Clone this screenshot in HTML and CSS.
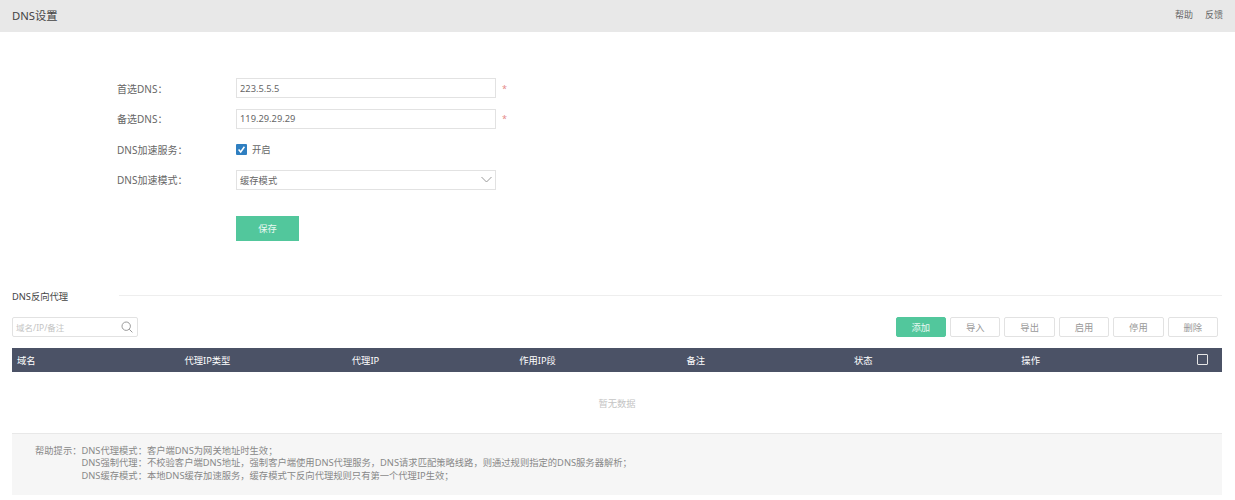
FILE: index.html
```html
<!DOCTYPE html>
<html>
<head>
  <title>DNS设置</title>
  <meta charset="UTF-8">
  <link rel="stylesheet" href="styles.css">
</head>
<body>
  <div class="top-bar">
    <span class="page-title">DNS设置</span>
    <div class="top-links">
      <a>帮助</a>
      <a>反馈</a>
    </div>
  </div>

  <!-- DNS settings form -->
  <div class="form">
    <div class="form-row">
      <label>首选DNS：</label>
      <input type="text" class="text-input" value="223.5.5.5">
      <span class="required">*</span>
    </div>
    <div class="form-row">
      <label>备选DNS：</label>
      <input type="text" class="text-input" value="119.29.29.29">
      <span class="required">*</span>
    </div>
    <div class="form-row">
      <label>DNS加速服务：</label>
      <span class="check-box">
        <svg width="11" height="11" viewBox="0 0 11 11"><path d="M2.6 5.6 L4.7 8 L8.4 2.8" fill="none" stroke="#fff" stroke-width="1.5"/></svg>
      </span>
      <span class="check-label">开启</span>
    </div>
    <div class="form-row">
      <label>DNS加速模式：</label>
      <div class="select-box">
        <span>缓存模式</span>
        <svg width="11" height="7" viewBox="0 0 11 7"><path d="M0.5 1 L5.5 6 L10.5 1" fill="none" stroke="#999" stroke-width="1"/></svg>
      </div>
    </div>
    <button class="save-btn">保存</button>
  </div>

  <!-- Reverse proxy section -->
  <div class="section">
    <div class="section-title">
      <span>DNS反向代理</span>
      <div class="section-line"></div>
    </div>

    <div class="toolbar">
      <div class="search-box">
        <span>域名/IP/备注</span>
        <svg width="12" height="12" viewBox="0 0 12 12"><circle cx="5.2" cy="5.2" r="4.2" fill="none" stroke="#999" stroke-width="1"/><path d="M8.2 8.2 L11.4 11.4" stroke="#999" stroke-width="1"/></svg>
      </div>
      <div class="actions">
        <button class="btn btn-primary">添加</button>
        <button class="btn">导入</button>
        <button class="btn">导出</button>
        <button class="btn">启用</button>
        <button class="btn">停用</button>
        <button class="btn">删除</button>
      </div>
    </div>

    <div class="table-head">
      <div class="cell">域名</div>
      <div class="cell">代理IP类型</div>
      <div class="cell">代理IP</div>
      <div class="cell">作用IP段</div>
      <div class="cell">备注</div>
      <div class="cell">状态</div>
      <div class="cell">操作</div>
      <div class="cell-check"><span class="head-check"></span></div>
    </div>
    <div class="empty">暂无数据</div>

    <div class="help">
      <span class="help-label">帮助提示：</span>
      <div class="help-text">
        <div>DNS代理模式：客户端DNS为网关地址时生效；</div>
        <div>DNS强制代理：不校验客户端DNS地址，强制客户端使用DNS代理服务，DNS请求匹配策略线路，则通过规则指定的DNS服务器解析；</div>
        <div>DNS缓存模式：本地DNS缓存加速服务，缓存模式下反向代理规则只有第一个代理IP生效；</div>
      </div>
    </div>
  </div>
</body>
</html>
```

FILE: styles.css
```css
* {
  box-sizing: border-box;
}

body {
  margin: 0;
  background-color: #fff;
  font-family: "Noto Sans", "Noto Sans CJK SC", sans-serif;
  font-size: 9.3px;
  color: #666;
}

.top-bar {
  display: flex;
  justify-content: space-between;
  align-items: center;
  height: 32px;
  padding: 0 12px 3px;
  background-color: #e8e8e8;
}

.page-title {
  font-size: 11.3px;
  color: #444;
}

.top-links {
  display: flex;
  gap: 12px;
  font-size: 9px;
  color: #666;
}

.form {
  padding: 46px 0 0 117px;
}

.form-row {
  display: flex;
  align-items: center;
  height: 20px;
  margin-bottom: 10.6px;
}

label {
  width: 119px;
  font-size: 10px;
  color: #666;
}

.text-input {
  width: 260px;
  height: 20px;
  padding: 0 3px;
  border: 1px solid #e2e2e2;
  font-family: inherit;
  font-size: 9.3px;
  color: #666;
  outline: none;
}

.required {
  margin-left: 6px;
  color: #e58a8a;
  font-size: 9px;
}

.check-box {
  display: flex;
  width: 11px;
  height: 11px;
  border-radius: 1px;
  background-color: #2f7fc1;
}

.check-label {
  margin-left: 5px;
}

.select-box {
  display: flex;
  justify-content: space-between;
  align-items: center;
  width: 260px;
  height: 20px;
  padding: 0 3px;
  border: 1px solid #e2e2e2;
}

.save-btn {
  display: block;
  width: 63px;
  height: 25px;
  margin: 26px 0 0 119px;
  border: none;
  background-color: #52c79c;
  color: #e8f8f2;
  font-family: inherit;
  font-size: 9.3px;
}

.section {
  padding: 48px 13px 0 12px;
}

.section-title {
  display: flex;
  align-items: center;
  height: 14px;
  color: #444;
}

.section-line {
  flex: 1;
  height: 1px;
  margin-left: 51px;
  background-color: #eee;
}

.toolbar {
  display: flex;
  justify-content: space-between;
  align-items: center;
  margin-top: 14px;
  padding-right: 4px;
}

.search-box {
  display: flex;
  justify-content: space-between;
  align-items: center;
  width: 126px;
  height: 20px;
  padding: 0 4px 0 3px;
  border: 1px solid #e2e2e2;
  border-radius: 2px;
  font-size: 8.5px;
  color: #c4c4c4;
}

.actions {
  display: flex;
  gap: 4px;
}

.btn {
  width: 50.4px;
  height: 20px;
  padding: 0;
  border: 1px solid #e2e2e2;
  border-radius: 2px;
  background-color: #fff;
  color: #999;
  font-family: inherit;
  font-size: 9.3px;
}

.btn-primary {
  border-color: #52c79c;
  background-color: #52c79c;
  color: #e8f8f2;
}

.table-head {
  display: flex;
  align-items: center;
  height: 24px;
  margin-top: 11px;
  padding-left: 5px;
  background-color: #4b5266;
  color: #fff;
}

.cell {
  width: 167.4px;
}

.cell-check {
  display: flex;
  flex: 1;
  justify-content: flex-end;
  padding-right: 14px;
}

.head-check {
  width: 11px;
  height: 11px;
  border: 1px solid #e6e6e6;
  border-radius: 1px;
}

.empty {
  height: 61px;
  padding-top: 24px;
  text-align: center;
  color: #c4c4c4;
}

.help {
  display: flex;
  height: 62px;
  padding: 11px 0 0 23px;
  border-top: 1px solid #e8e8e8;
  background-color: #f6f6f6;
  color: #888;
  line-height: 12.5px;
}
```
